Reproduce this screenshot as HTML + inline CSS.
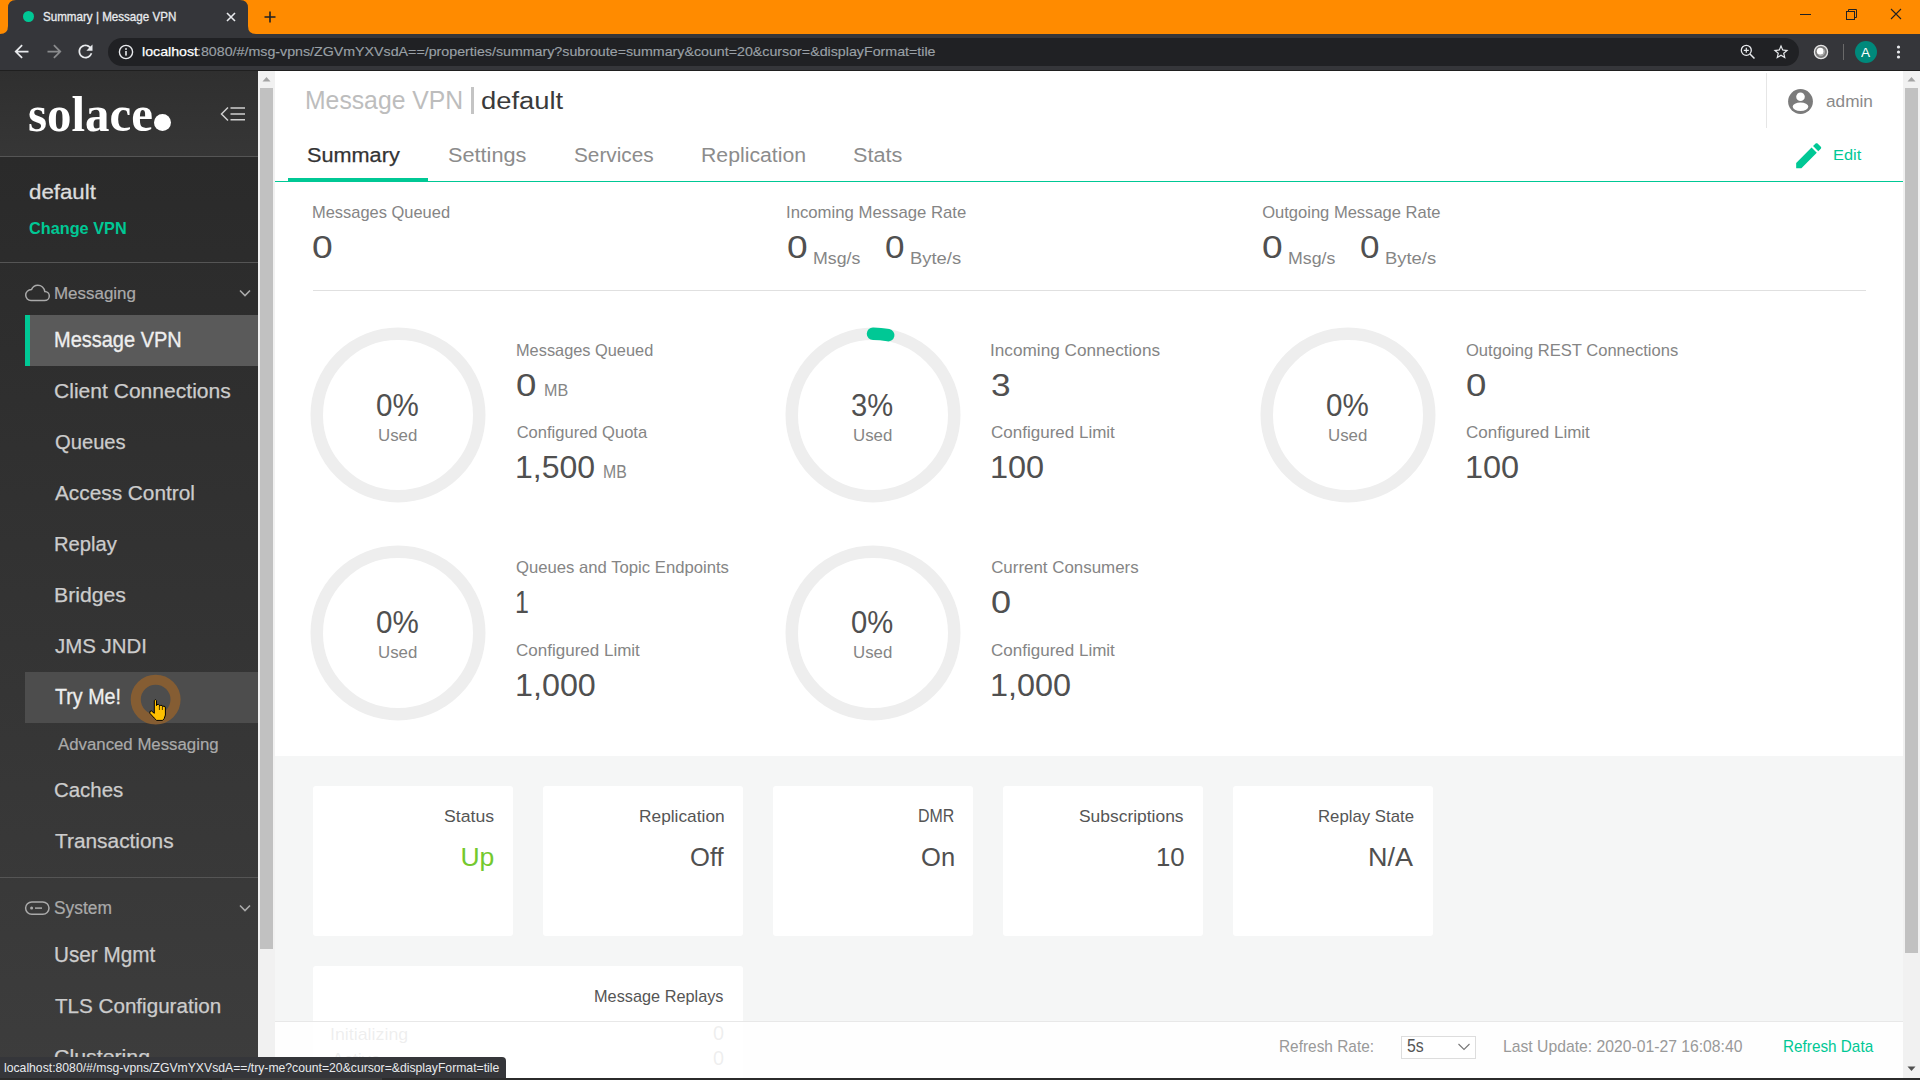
<!DOCTYPE html>
<html><head><meta charset="utf-8"><title>Summary | Message VPN</title>
<style>
html,body{margin:0;padding:0;width:1920px;height:1080px;overflow:hidden;background:#fff;}
body{position:relative;font-family:"Liberation Sans", sans-serif;}
.t{position:absolute;white-space:nowrap;line-height:1;transform-origin:0 0;}
.r{position:absolute;}
svg.r{overflow:visible;}
</style></head><body>
<div class="r" style="left:0.00px;top:0.00px;width:1920.00px;height:34.00px;background:#ff8b00;"></div>
<svg class="r" style="left:0;top:0" width="300" height="34" viewBox="0 0 300 34">
<path d="M0 34 Q8 34 8 26 L8 8 Q8 0 16 0 L240 0 Q248 0 248 8 L248 26 Q248 34 256 34 Z" fill="#35363a"/></svg>
<div class="r" style="left:22.5px;top:11.4px;width:11px;height:11px;border-radius:50%;background:#00c895"></div>
<div class="t" style="left:43.48px;top:11.00px;font-size:12.14px;color:#e8eaed;transform:scaleX(0.9575);-webkit-text-stroke:0.30px #e8eaed;">Summary | Message VPN</div>
<svg class="r" style="left:225px;top:11px" width="12" height="12" viewBox="0 0 12 12"><path d="M2 2L10 10M10 2L2 10" stroke="#e8eaed" stroke-width="1.6"/></svg>
<svg class="r" style="left:262px;top:9px" width="16" height="16" viewBox="0 0 16 16"><path d="M8 2.5V13.5M2.5 8H13.5" stroke="#202124" stroke-width="1.6"/></svg>
<svg class="r" style="left:1790px;top:4.5px" width="130" height="20" viewBox="0 0 130 20">
<path d="M10 9.5H21" stroke="#202124" stroke-width="1"/>
<rect x="56.5" y="6.5" width="8" height="8" fill="none" stroke="#202124" stroke-width="1"/>
<path d="M58.5 6.5V4.5H66.5V12.5H64.5" fill="none" stroke="#202124" stroke-width="1"/>
<path d="M101 4L111 14M111 4L101 14" stroke="#202124" stroke-width="1.1"/>
</svg>
<div class="r" style="left:0.00px;top:34.00px;width:1920.00px;height:36.00px;background:#35363a;"></div>
<div class="r" style="left:0.00px;top:70.00px;width:1920.00px;height:1.00px;background:#1f1f1f;"></div>
<div class="r" style="left:108.00px;top:38.00px;width:1691.00px;height:28.00px;background:#202124;border-radius:14px;"></div>
<svg class="r" style="left:11.2px;top:41.4px" width="21" height="21" viewBox="0 0 24 24"><path d="M20 11H7.83l5.59-5.59L12 4l-8 8 8 8 1.41-1.41L7.83 13H20v-2z" fill="#e8eaed"/></svg>
<svg class="r" style="left:43.5px;top:41.4px" width="21" height="21" viewBox="0 0 24 24"><path d="M12 4l-1.41 1.41L16.17 11H4v2h12.17l-5.58 5.59L12 20l8-8z" fill="#8a8b8d"/></svg>
<svg class="r" style="left:75.3px;top:41.4px" width="21" height="21" viewBox="0 0 24 24"><path d="M17.65 6.35C16.2 4.9 14.21 4 12 4c-4.42 0-7.99 3.58-7.99 8s3.57 8 7.99 8c3.73 0 6.84-2.55 7.73-6h-2.08c-.82 2.33-3.04 4-5.65 4-3.31 0-6-2.69-6-6s2.69-6 6-6c1.66 0 3.14.69 4.22 1.78L13 11h7V4l-2.35 2.35z" fill="#e8eaed"/></svg>
<svg class="r" style="left:118px;top:44px" width="16" height="16" viewBox="0 0 16 16"><circle cx="8" cy="8" r="6.6" fill="none" stroke="#e8eaed" stroke-width="1.4"/><rect x="7.2" y="7" width="1.6" height="4.6" fill="#e8eaed"/><circle cx="8" cy="5" r="0.95" fill="#e8eaed"/></svg>
<div class="t" style="left:141.54px;top:45.00px;font-size:13.24px;color:#ffffff;transform:scaleX(1.0726);-webkit-text-stroke:0.25px #ffffff;">localhost</div>
<div class="t" style="left:196.72px;top:45.00px;font-size:13.24px;color:#9aa0a6;transform:scaleX(1.0749);-webkit-text-stroke:0.15px #9aa0a6;">:8080/#/msg-vpns/ZGVmYXVsdA==/properties/summary?subroute=summary&amp;count=20&amp;cursor=&amp;displayFormat=tile</div>
<svg class="r" style="left:1739px;top:43px" width="18" height="18" viewBox="0 0 18 18"><circle cx="7.3" cy="7.3" r="5" fill="none" stroke="#e8eaed" stroke-width="1.3"/><path d="M11 11L15.5 15.5" stroke="#e8eaed" stroke-width="1.5"/><path d="M7.3 4.8V9.8M4.8 7.3H9.8" stroke="#e8eaed" stroke-width="1.2"/></svg>
<svg class="r" style="left:1772px;top:43px" width="18" height="18" viewBox="0 0 24 24"><path d="M22 9.24l-7.19-.62L12 2 9.19 8.63 2 9.24l5.46 4.73L5.82 21 12 17.27 18.18 21l-1.63-7.03L22 9.24zM12 15.4l-3.76 2.27 1-4.28-3.32-2.88 4.38-.38L12 6.1l1.71 4.04 4.38.38-3.32 2.88 1 4.28L12 15.4z" fill="#e8eaed"/></svg>
<svg class="r" style="left:1812px;top:43px" width="18" height="18" viewBox="0 0 18 18"><circle cx="9" cy="9" r="6.6" fill="#7a7a7a" stroke="#e6e6e6" stroke-width="1.3"/><circle cx="8.3" cy="8.3" r="3.5" fill="#ffffff"/><path d="M11.9 6.8A3.9 3.9 0 0 1 7 12.2" fill="none" stroke="#a8a8a8" stroke-width="1.4"/></svg>
<div class="r" style="left:1843.00px;top:44.00px;width:1.00px;height:16.00px;background:#6a6a6a;"></div>
<div class="r" style="left:1855px;top:41px;width:22px;height:22px;border-radius:50%;background:#00897b"></div>
<div class="t" style="left:1861.47px;top:46.00px;font-size:13.09px;color:#ffffff;transform:scaleX(1.0377);">A</div>
<svg class="r" style="left:1894px;top:44px" width="10" height="18" viewBox="0 0 10 18"><circle cx="4.5" cy="3" r="1.6" fill="#e8eaed"/><circle cx="4.5" cy="8" r="1.6" fill="#e8eaed"/><circle cx="4.5" cy="13" r="1.6" fill="#e8eaed"/></svg>
<div class="r" style="left:0.00px;top:71.00px;width:1920.00px;height:1009.00px;background:#ffffff;"></div>
<div class="r" style="left:0.00px;top:71.00px;width:258.00px;height:85.00px;background:linear-gradient(#2f2f2f,#363636);"></div>
<div class="r" style="left:0.00px;top:156.00px;width:258.00px;height:1.00px;background:#555555;"></div>
<div class="r" style="left:0.00px;top:157.00px;width:258.00px;height:923.00px;background:linear-gradient(#2a2a2a,#3d3d3d);"></div>
<div class="r" style="left:258.00px;top:71.00px;width:17.00px;height:1009.00px;background:#f1f1f1;"></div>
<div class="r" style="left:260.00px;top:88.00px;width:13.00px;height:861.00px;background:#c1c1c1;"></div>
<svg class="r" style="left:262px;top:76px" width="9" height="6" viewBox="0 0 9 6"><path d="M0.5 5.5L4.5 1L8.5 5.5Z" fill="#a3a3a3"/></svg>
<div class="r" style="left:1903.00px;top:71.00px;width:17.00px;height:1009.00px;background:#f1f1f1;"></div>
<div class="r" style="left:1905.00px;top:88.00px;width:13.00px;height:865.00px;background:#c1c1c1;"></div>
<svg class="r" style="left:1907px;top:76px" width="9" height="6" viewBox="0 0 9 6"><path d="M0.5 5.5L4.5 1L8.5 5.5Z" fill="#a3a3a3"/></svg>
<svg class="r" style="left:1907px;top:1066px" width="9" height="6" viewBox="0 0 9 6"><path d="M0.5 0.5L4.5 5L8.5 0.5Z" fill="#505050"/></svg>
<div class="t" style="left:28.28px;top:90.00px;font-size:49.78px;color:#ffffff;font-family:'Liberation Serif', serif;font-weight:bold;transform:scaleX(0.9824);">solace</div>
<div class="r" style="left:153.8px;top:113.9px;width:17.2px;height:17.2px;border-radius:50%;background:#fff"></div>
<svg class="r" style="left:219px;top:106px" width="28" height="16" viewBox="0 0 28 16"><path d="M9 1.5L2.5 8L9 14.5" fill="none" stroke="#cfcfcf" stroke-width="1.5"/><path d="M11.5 2.1H26M11.5 8H26M11.5 13.75H26" stroke="#cfcfcf" stroke-width="1.5"/></svg>
<div class="t" style="left:29.05px;top:182.00px;font-size:20.28px;color:#dddddd;transform:scaleX(1.0991);-webkit-text-stroke:0.30px #dddddd;">default</div>
<div class="t" style="left:29.35px;top:220.00px;font-size:16.14px;color:#00c895;font-weight:bold;transform:scaleX(1.0091);">Change VPN</div>
<svg class="r" style="left:24px;top:283px" width="27" height="20" viewBox="0 0 27 20"><path d="M7 17.5H20.5C23.3 17.5 25.3 15.4 25.3 12.9C25.3 10.4 23.3 8.4 20.8 8.4C20.2 4.9 17.4 2.2 13.8 2.2C11 2.2 8.6 3.9 7.6 6.4C4.2 6.6 1.7 9.1 1.7 12.1C1.7 15.1 4.1 17.5 7 17.5Z" fill="none" stroke="#aaaaaa" stroke-width="1.5"/></svg>
<div class="t" style="left:54.10px;top:286.00px;font-size:16.69px;color:#aaaaaa;transform:scaleX(1.0157);-webkit-text-stroke:0.20px #aaaaaa;">Messaging</div>
<svg class="r" style="left:238px;top:288px" width="14" height="10" viewBox="0 0 14 10"><path d="M2 2.5L7 7.5L12 2.5" fill="none" stroke="#aaaaaa" stroke-width="1.6"/></svg>
<div class="r" style="left:25.00px;top:315.00px;width:233.00px;height:51.00px;background:#5a5a5a;"></div>
<div class="r" style="left:25.00px;top:315.00px;width:5.00px;height:51.00px;background:#00c895;"></div>
<div class="t" style="left:53.85px;top:330.00px;font-size:21.38px;color:#eeeeee;transform:scaleX(0.9350);-webkit-text-stroke:0.35px #eeeeee;">Message VPN</div>
<div class="t" style="left:54.45px;top:381.00px;font-size:20.28px;color:#cccccc;transform:scaleX(1.0392);-webkit-text-stroke:0.25px #cccccc;">Client Connections</div>
<div class="t" style="left:54.54px;top:431.00px;font-size:21.08px;color:#cccccc;transform:scaleX(0.9573);-webkit-text-stroke:0.25px #cccccc;">Queues</div>
<div class="t" style="left:55.45px;top:483.00px;font-size:20.28px;color:#cccccc;transform:scaleX(1.0264);-webkit-text-stroke:0.25px #cccccc;">Access Control</div>
<div class="t" style="left:53.83px;top:534.00px;font-size:20.28px;color:#cccccc;transform:scaleX(0.9970);-webkit-text-stroke:0.25px #cccccc;">Replay</div>
<div class="t" style="left:53.75px;top:585.00px;font-size:20.28px;color:#cccccc;transform:scaleX(1.0474);-webkit-text-stroke:0.25px #cccccc;">Bridges</div>
<div class="t" style="left:55.19px;top:635.00px;font-size:21.08px;color:#cccccc;transform:scaleX(0.9700);-webkit-text-stroke:0.25px #cccccc;">JMS JNDI</div>
<div class="r" style="left:25.00px;top:672.00px;width:233.00px;height:51.00px;background:#4d4d4d;"></div>
<div class="t" style="left:55.06px;top:687.00px;font-size:21.38px;color:#eeeeee;transform:scaleX(0.9209);-webkit-text-stroke:0.30px #eeeeee;">Try Me!</div>
<div class="t" style="left:57.66px;top:737.00px;font-size:16.97px;color:#aaaaaa;transform:scaleX(0.9908);-webkit-text-stroke:0.20px #aaaaaa;">Advanced Messaging</div>
<div class="t" style="left:54.48px;top:780.00px;font-size:20.28px;color:#cccccc;transform:scaleX(1.0073);-webkit-text-stroke:0.25px #cccccc;">Caches</div>
<div class="t" style="left:55.03px;top:831.00px;font-size:20.28px;color:#cccccc;transform:scaleX(1.0293);-webkit-text-stroke:0.25px #cccccc;">Transactions</div>
<div class="r" style="left:0.00px;top:877.00px;width:258.00px;height:1.00px;background:#555555;"></div>
<div class="r" style="left:0.00px;top:262.00px;width:258.00px;height:1.00px;background:#555555;"></div>
<svg class="r" style="left:24px;top:900px" width="27" height="17" viewBox="0 0 27 17"><rect x="1.6" y="1.9" width="23.4" height="12.4" rx="6.2" fill="none" stroke="#aaaaaa" stroke-width="1.5"/><circle cx="7.6" cy="8.1" r="1.5" fill="#aaaaaa"/><path d="M11 8.1H18" stroke="#aaaaaa" stroke-width="1.5"/></svg>
<div class="t" style="left:54.22px;top:900.00px;font-size:17.63px;color:#aaaaaa;transform:scaleX(0.9854);-webkit-text-stroke:0.20px #aaaaaa;">System</div>
<svg class="r" style="left:238px;top:903px" width="14" height="10" viewBox="0 0 14 10"><path d="M2 2.5L7 7.5L12 2.5" fill="none" stroke="#aaaaaa" stroke-width="1.6"/></svg>
<div class="t" style="left:53.90px;top:945.00px;font-size:21.38px;color:#cccccc;transform:scaleX(0.9685);-webkit-text-stroke:0.25px #cccccc;">User Mgmt</div>
<div class="t" style="left:55.04px;top:996.00px;font-size:20.28px;color:#cccccc;transform:scaleX(1.0173);-webkit-text-stroke:0.25px #cccccc;">TLS Configuration</div>
<div class="t" style="left:54.43px;top:1047.00px;font-size:20.28px;color:#cccccc;transform:scaleX(1.0533);-webkit-text-stroke:0.25px #cccccc;">Clustering</div>
<svg class="r" style="left:120px;top:665px" width="70" height="70" viewBox="0 0 70 70"><circle cx="35.65" cy="34.6" r="19.9" fill="none" stroke="#855d33" stroke-width="10.1"/>
<path d="M34.3 45 L34.3 35.6 Q35.4 33.8 36.5 35.6 L36.5 40.6 L37 39.6 Q38.6 38.9 39.4 40.2 L39.6 41 Q40.6 39.9 42.2 40.5 L42.6 41.5 Q44 40.6 45.2 41.8 L45.4 43 L45.4 50 L44.2 53.6 L42.6 55.4 L36.6 55.4 L34.2 53 L29.8 48.2 Q29.2 46 31.4 45.9 L34.3 48.3 Z" fill="#ffc000" stroke="#000" stroke-width="1"/>
<path d="M39.4 41 V45 M42.4 41.5 V45" stroke="#000" stroke-width="0.7"/></svg>
<div class="t" style="left:305.46px;top:88.00px;font-size:25.45px;color:#bdbdbd;transform:scaleX(0.9728);">Message VPN</div>
<div class="r" style="left:471.00px;top:87.00px;width:2.50px;height:26.50px;background:#c4c4c4;"></div>
<div class="t" style="left:481.34px;top:89.00px;font-size:24.83px;color:#3a3a3a;transform:scaleX(1.1023);">default</div>
<div class="r" style="left:1766.00px;top:72.50px;width:1.00px;height:55.00px;background:#e6e6e6;"></div>
<svg class="r" style="left:1788px;top:88.6px" width="25" height="25" viewBox="0 0 25 25"><defs><clipPath id="pc"><circle cx="12.5" cy="12.5" r="12.4"/></clipPath></defs><circle cx="12.5" cy="12.5" r="12.4" fill="#7b7b7b"/><circle cx="12.5" cy="7.7" r="4.3" fill="#fff"/><ellipse cx="12.5" cy="17.8" rx="7.8" ry="4.2" fill="#fff"/></svg>
<div class="t" style="left:1825.57px;top:94.00px;font-size:16.83px;color:#8a8a8a;transform:scaleX(1.0239);">admin</div>
<div class="t" style="left:307.02px;top:145.00px;font-size:20.79px;color:#333333;transform:scaleX(1.0428);-webkit-text-stroke:0.25px #333333;">Summary</div>
<div class="t" style="left:448.22px;top:145.00px;font-size:20.00px;color:#8c8c8c;transform:scaleX(1.0842);">Settings</div>
<div class="t" style="left:574.07px;top:145.00px;font-size:20.00px;color:#8c8c8c;transform:scaleX(1.0386);">Services</div>
<div class="t" style="left:700.75px;top:145.00px;font-size:20.00px;color:#8c8c8c;transform:scaleX(1.0619);">Replication</div>
<div class="t" style="left:853.32px;top:145.00px;font-size:20.79px;color:#8c8c8c;transform:scaleX(1.0430);">Stats</div>
<div class="r" style="left:275.00px;top:180.50px;width:1628.00px;height:1.50px;background:#00c895;"></div>
<div class="r" style="left:288.00px;top:177.70px;width:140.00px;height:3.80px;background:#00c895;"></div>
<svg class="r" style="left:1791.5px;top:138.8px" width="33.4" height="33.4" viewBox="0 0 24 24"><path d="M3 17.25V21h3.75L17.81 9.94l-3.75-3.75L3 17.25zM20.71 7.04c.39-.39.39-1.02 0-1.41l-2.34-2.34c-.39-.39-1.02-.39-1.41 0l-1.83 1.83 3.75 3.75 1.83-1.83z" fill="#00c895"/></svg>
<div class="t" style="left:1832.55px;top:148.00px;font-size:14.90px;color:#00c895;transform:scaleX(1.0979);">Edit</div>
<div class="t" style="left:311.64px;top:205.00px;font-size:16.55px;color:#858585;transform:scaleX(0.9948);">Messages Queued</div>
<div class="t" style="left:311.51px;top:232.00px;font-size:30.47px;color:#505050;transform:scaleX(1.2236);">0</div>
<div class="t" style="left:786.45px;top:205.00px;font-size:16.55px;color:#858585;transform:scaleX(1.0114);">Incoming Message Rate</div>
<div class="t" style="left:1262.21px;top:205.00px;font-size:16.55px;color:#858585;">Outgoing Message Rate</div>
<div class="t" style="left:786.51px;top:232.00px;font-size:30.47px;color:#505050;transform:scaleX(1.2201);">0</div>
<div class="t" style="left:812.79px;top:251.00px;font-size:16.90px;color:#858585;transform:scaleX(1.0502);">Msg/s</div>
<div class="t" style="left:884.85px;top:232.00px;font-size:30.47px;color:#505050;transform:scaleX(1.1514);">0</div>
<div class="t" style="left:910.23px;top:251.00px;font-size:16.90px;color:#858585;transform:scaleX(1.0892);">Byte/s</div>
<div class="t" style="left:1261.51px;top:232.00px;font-size:30.47px;color:#505050;transform:scaleX(1.2201);">0</div>
<div class="t" style="left:1287.79px;top:251.00px;font-size:16.90px;color:#858585;transform:scaleX(1.0502);">Msg/s</div>
<div class="t" style="left:1359.85px;top:232.00px;font-size:30.47px;color:#505050;transform:scaleX(1.1514);">0</div>
<div class="t" style="left:1385.23px;top:251.00px;font-size:16.90px;color:#858585;transform:scaleX(1.0892);">Byte/s</div>
<div class="r" style="left:313.00px;top:290.00px;width:1553.00px;height:1.00px;background:#e0e0e0;"></div>
<svg class="r" style="left:307.50px;top:325.00px" width="180" height="180" viewBox="0 0 180 180"><circle cx="90" cy="90" r="81.25" fill="none" stroke="#eeeeee" stroke-width="12.5"/></svg>
<div class="t" style="left:376.32px;top:390.00px;font-size:31.11px;color:#505050;transform:scaleX(0.9502);">0%</div>
<div class="t" style="left:377.94px;top:428.00px;font-size:16.55px;color:#858585;transform:scaleX(1.0196);">Used</div>
<svg class="r" style="left:782.50px;top:325.00px" width="180" height="180" viewBox="0 0 180 180"><circle cx="90" cy="90" r="81.25" fill="none" stroke="#eeeeee" stroke-width="12.5"/><path d="M90 8.75 A81.25 81.25 0 0 1 105.22 10.19" fill="none" stroke="#00c895" stroke-width="12.5" stroke-linecap="round"/></svg>
<div class="t" style="left:851.41px;top:390.00px;font-size:31.11px;color:#505050;transform:scaleX(0.9368);">3%</div>
<div class="t" style="left:852.94px;top:428.00px;font-size:16.55px;color:#858585;transform:scaleX(1.0196);">Used</div>
<svg class="r" style="left:1257.50px;top:325.00px" width="180" height="180" viewBox="0 0 180 180"><circle cx="90" cy="90" r="81.25" fill="none" stroke="#eeeeee" stroke-width="12.5"/></svg>
<div class="t" style="left:1326.32px;top:390.00px;font-size:31.11px;color:#505050;transform:scaleX(0.9502);">0%</div>
<div class="t" style="left:1327.94px;top:428.00px;font-size:16.55px;color:#858585;transform:scaleX(1.0196);">Used</div>
<svg class="r" style="left:307.50px;top:542.50px" width="180" height="180" viewBox="0 0 180 180"><circle cx="90" cy="90" r="81.25" fill="none" stroke="#eeeeee" stroke-width="12.5"/></svg>
<div class="t" style="left:376.32px;top:607.00px;font-size:31.11px;color:#505050;transform:scaleX(0.9502);">0%</div>
<div class="t" style="left:377.94px;top:645.00px;font-size:16.55px;color:#858585;transform:scaleX(1.0196);">Used</div>
<svg class="r" style="left:782.50px;top:542.50px" width="180" height="180" viewBox="0 0 180 180"><circle cx="90" cy="90" r="81.25" fill="none" stroke="#eeeeee" stroke-width="12.5"/></svg>
<div class="t" style="left:851.33px;top:607.00px;font-size:31.11px;color:#505050;transform:scaleX(0.9385);">0%</div>
<div class="t" style="left:852.94px;top:645.00px;font-size:16.55px;color:#858585;transform:scaleX(1.0196);">Used</div>
<div class="t" style="left:516.15px;top:342.00px;font-size:16.28px;color:#858585;transform:scaleX(1.0050);">Messages Queued</div>
<div class="t" style="left:516.03px;top:370.00px;font-size:31.25px;color:#505050;transform:scaleX(1.1726);">0</div>
<div class="t" style="left:543.67px;top:382.00px;font-size:17.31px;color:#858585;transform:scaleX(0.9311);">MB</div>
<div class="t" style="left:516.67px;top:425.00px;font-size:16.55px;color:#858585;">Configured Quota</div>
<div class="t" style="left:515.10px;top:452.00px;font-size:31.25px;color:#505050;transform:scaleX(1.0241);">1,500</div>
<div class="t" style="left:603.09px;top:464.00px;font-size:17.75px;color:#858585;transform:scaleX(0.8917);">MB</div>
<div class="t" style="left:990.41px;top:342.00px;font-size:16.28px;color:#858585;transform:scaleX(1.0568);">Incoming Connections</div>
<div class="t" style="left:990.68px;top:370.00px;font-size:31.25px;color:#505050;transform:scaleX(1.1283);">3</div>
<div class="t" style="left:991.15px;top:425.00px;font-size:16.55px;color:#858585;transform:scaleX(1.0289);">Configured Limit</div>
<div class="t" style="left:989.56px;top:452.00px;font-size:31.25px;color:#505050;transform:scaleX(1.0391);">100</div>
<div class="t" style="left:1466.21px;top:342.00px;font-size:16.28px;color:#858585;transform:scaleX(1.0176);">Outgoing REST Connections</div>
<div class="t" style="left:1465.53px;top:370.00px;font-size:31.25px;color:#505050;transform:scaleX(1.1726);">0</div>
<div class="t" style="left:1466.15px;top:425.00px;font-size:16.55px;color:#858585;transform:scaleX(1.0289);">Configured Limit</div>
<div class="t" style="left:1464.56px;top:452.00px;font-size:31.25px;color:#505050;transform:scaleX(1.0391);">100</div>
<div class="t" style="left:516.21px;top:559.00px;font-size:16.28px;color:#858585;transform:scaleX(1.0254);">Queues and Topic Endpoints</div>
<div class="t" style="left:515.13px;top:587.00px;font-size:31.71px;color:#505050;transform:scaleX(0.7875);">1</div>
<div class="t" style="left:516.15px;top:643.00px;font-size:16.55px;color:#858585;transform:scaleX(1.0289);">Configured Limit</div>
<div class="t" style="left:514.58px;top:670.00px;font-size:31.25px;color:#505050;transform:scaleX(1.0335);">1,000</div>
<div class="t" style="left:991.16px;top:560.00px;font-size:16.92px;color:#858585;">Current Consumers</div>
<div class="t" style="left:990.55px;top:587.00px;font-size:31.25px;color:#505050;transform:scaleX(1.1559);">0</div>
<div class="t" style="left:991.15px;top:643.00px;font-size:16.55px;color:#858585;transform:scaleX(1.0289);">Configured Limit</div>
<div class="t" style="left:989.57px;top:670.00px;font-size:31.25px;color:#505050;transform:scaleX(1.0375);">1,000</div>
<div class="r" style="left:275.00px;top:756.00px;width:1628.00px;height:324.00px;background:#f5f6f6;"></div>
<div class="r" style="left:313.00px;top:786.00px;width:200.00px;height:150.00px;background:#ffffff;border-radius:3px;"></div>
<div class="t" style="left:443.70px;top:808.00px;font-size:17.20px;color:#555555;transform:scaleX(1.0285);">Status</div>
<div class="t" style="left:460.45px;top:844.00px;font-size:26.55px;color:#74c92e;">Up</div>
<div class="r" style="left:543.00px;top:786.00px;width:200.00px;height:150.00px;background:#ffffff;border-radius:3px;"></div>
<div class="t" style="left:638.57px;top:809.00px;font-size:16.55px;color:#555555;transform:scaleX(1.0473);">Replication</div>
<div class="t" style="left:689.53px;top:845.00px;font-size:25.26px;color:#505050;transform:scaleX(1.0131);">Off</div>
<div class="r" style="left:773.00px;top:786.00px;width:200.00px;height:150.00px;background:#ffffff;border-radius:3px;"></div>
<div class="t" style="left:917.68px;top:808.00px;font-size:17.45px;color:#555555;transform:scaleX(0.9137);">DMR</div>
<div class="t" style="left:920.79px;top:844.00px;font-size:26.16px;color:#505050;transform:scaleX(0.9770);">On</div>
<div class="r" style="left:1003.00px;top:786.00px;width:200.00px;height:150.00px;background:#ffffff;border-radius:3px;"></div>
<div class="t" style="left:1079.22px;top:809.00px;font-size:16.55px;color:#555555;transform:scaleX(1.0533);">Subscriptions</div>
<div class="t" style="left:1155.56px;top:844.00px;font-size:26.16px;color:#505050;transform:scaleX(0.9866);">10</div>
<div class="r" style="left:1233.00px;top:786.00px;width:200.00px;height:150.00px;background:#ffffff;border-radius:3px;"></div>
<div class="t" style="left:1317.87px;top:809.00px;font-size:16.55px;color:#555555;transform:scaleX(1.0141);">Replay State</div>
<div class="t" style="left:1368.27px;top:845.00px;font-size:25.17px;color:#505050;transform:scaleX(1.0732);">N/A</div>
<div class="r" style="left:313.00px;top:966.00px;width:430.00px;height:200.00px;background:#ffffff;border-radius:3px;"></div>
<div class="t" style="left:594.15px;top:989.00px;font-size:16.55px;color:#555555;transform:scaleX(0.9857);">Message Replays</div>
<div class="t" style="left:330.35px;top:1027.00px;font-size:16.55px;color:#555555;transform:scaleX(1.0771);">Initializing</div>
<div class="t" style="left:712.95px;top:1024.00px;font-size:19.35px;color:#555555;transform:scaleX(1.0279);">0</div>
<div class="t" style="left:331.96px;top:1052.00px;font-size:16.55px;color:#555555;transform:scaleX(1.0831);">Active</div>
<div class="t" style="left:712.95px;top:1049.00px;font-size:19.35px;color:#555555;transform:scaleX(1.0279);">0</div>
<div class="r" style="left:275.00px;top:1021.00px;width:1628.00px;height:59.00px;background:rgba(255,255,255,0.9);border-top:1px solid #e8e8e8;box-sizing:border-box;"></div>
<div class="t" style="left:1279.23px;top:1039.00px;font-size:16.55px;color:#999999;transform:scaleX(0.9318);">Refresh Rate:</div>
<div class="r" style="left:1401.25px;top:1036.25px;width:74.50px;height:22.50px;background:#ffffff;border:1px solid #dddddd;box-sizing:border-box;"></div>
<div class="t" style="left:1406.87px;top:1038.00px;font-size:17.45px;color:#555555;transform:scaleX(0.9061);">5s</div>
<svg class="r" style="left:1457px;top:1042px" width="14" height="10" viewBox="0 0 14 10"><path d="M1.5 2L7 7.5L12.5 2" fill="none" stroke="#777" stroke-width="1.1"/></svg>
<div class="t" style="left:1502.90px;top:1039.00px;font-size:16.55px;color:#999999;transform:scaleX(0.9507);">Last Update: 2020-01-27 16:08:40</div>
<div class="t" style="left:1782.74px;top:1039.00px;font-size:16.55px;color:#00c895;transform:scaleX(0.9255);">Refresh Data</div>
<div class="r" style="left:0.00px;top:1077.50px;width:1920.00px;height:2.50px;background:#2b2b2b;"></div>
<div class="r" style="left:222.00px;top:1077.50px;width:160.00px;height:2.50px;background:#3c3c3c;"></div>
<div class="r" style="left:0.00px;top:1056.50px;width:506.00px;height:21.00px;background:#35363a;border-top-right-radius:4px;"></div>
<div class="t" style="left:4.18px;top:1062.00px;font-size:12.69px;color:#e8eaed;transform:scaleX(0.9614);">localhost:8080/#/msg-vpns/ZGVmYXVsdA==/try-me?count=20&amp;cursor=&amp;displayFormat=tile</div>
</body></html>
